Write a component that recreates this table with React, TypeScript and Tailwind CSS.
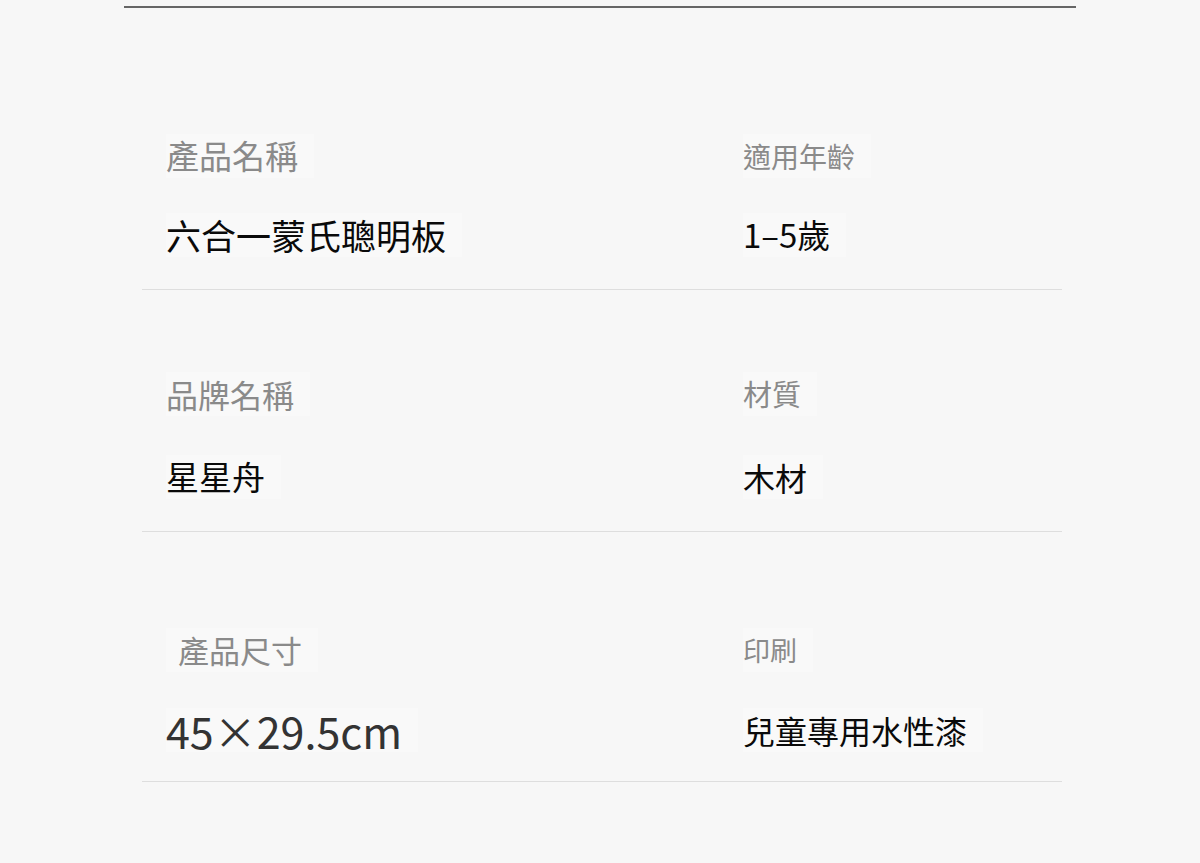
const font = { fontFamily: '"Noto Sans CJK TC", "Noto Sans", sans-serif' }

type Cell = { label: string; value: string; labelSize: string; valueSize: string; valueColor?: string; labelPad?: string }

function SpecCell({ cell }: { cell: Cell }) {
  return (
    <div className="flex flex-col">
      <div className="flex">
        <div className={`flex h-[44px] items-center bg-[#f9f9f9] pr-4 text-[#8a8a8a] ${cell.labelPad ?? ''} ${cell.labelSize}`}>
          {cell.label}
        </div>
      </div>
      <div className="h-[var(--gap)]" />
      <div className="flex">
        <div className={`flex h-[44px] items-center bg-[#f9f9f9] pr-4 ${cell.valueColor ?? 'text-[#0a0a0a]'} ${cell.valueSize}`}>
          {cell.value}
        </div>
      </div>
    </div>
  )
}

function SpecRow({ left, right, className, gap }: { left: Cell; right: Cell; className: string; gap: string }) {
  return (
    <div className={`grid grid-cols-[577px_1fr] border-b border-[#dedede] px-6 ${className} ${gap}`}>
      <SpecCell cell={left} />
      <SpecCell cell={right} />
    </div>
  )
}

export default function App() {
  return (
    <div className="min-h-[863px] w-full bg-[#f7f7f7]" style={font}>
      <div className="mx-auto w-[952px] pt-[6px]">
        <div className="h-[2px] bg-[#666]" />
      </div>
      <div className="mx-auto w-[924px] pl-[4px]">
        <SpecRow
          className="pt-[126px] pb-[32px]"
          gap="[--gap:35px]"
          left={{ label: '產品名稱', value: '六合一蒙氏聰明板', labelSize: 'text-[33px]', valueSize: 'text-[35px]' }}
          right={{ label: '適用年齡', value: '1–5歲', labelSize: 'text-[28px]', valueSize: 'text-[33px]' }}
        />
        <SpecRow
          className="pt-[82px] pb-[32px]"
          gap="[--gap:39px]"
          left={{ label: '品牌名稱', value: '星星舟', labelSize: 'text-[32px]', valueSize: 'text-[33px]' }}
          right={{ label: '材質', value: '木材', labelSize: 'text-[29px]', valueSize: 'text-[32px]' }}
        />
        <SpecRow
          className="pt-[96px] pb-[29px]"
          gap="[--gap:36px]"
          left={{ label: '產品尺寸', value: '45×29.5cm', labelSize: 'text-[31px]', valueSize: 'text-[43px]', valueColor: 'text-[#333]', labelPad: 'pl-3' }}
          right={{ label: '印刷', value: '兒童專用水性漆', labelSize: 'text-[27px]', valueSize: 'text-[32px]' }}
        />
      </div>
    </div>
  )
}
